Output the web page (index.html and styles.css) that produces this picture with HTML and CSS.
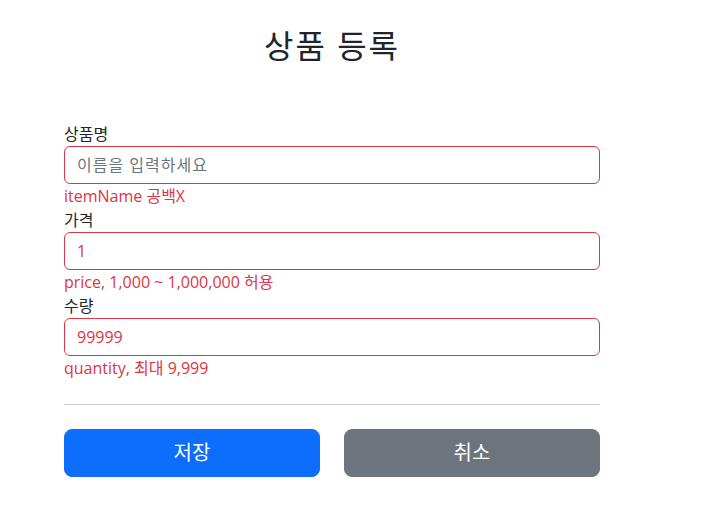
FILE: index.html
```
<!DOCTYPE html>
<html lang="ko">
<head>
<meta charset="utf-8">
<title>상품 등록</title>
<link rel="stylesheet" href="styles.css">
</head>
<body>
<div class="container">
  <div class="header">
    <h2 class="title">상품 등록</h2>
  </div>
  <form class="form">
    <div class="group">
      <label class="label" for="itemName">상품명</label>
      <input class="input field-error" id="itemName" type="text" placeholder="이름을 입력하세요">
      <div class="error">itemName 공백X</div>
    </div>
    <div class="group">
      <label class="label" for="price">가격</label>
      <input class="input field-error" id="price" type="text" value="1">
      <div class="error">price, 1,000 ~ 1,000,000 허용</div>
    </div>
    <div class="group">
      <label class="label" for="quantity">수량</label>
      <input class="input field-error" id="quantity" type="text" value="99999">
      <div class="error">quantity, 최대 9,999</div>
    </div>
    <hr class="divider">
    <div class="actions">
      <button class="btn btn-primary" type="button">저장</button>
      <button class="btn btn-secondary" type="button">취소</button>
    </div>
  </form>
</div>
</body>
</html>
```
FILE: styles.css
```
* { box-sizing: border-box; }
html, body { margin: 0; padding: 0; background: #fff; }
body {
  font-family: "Open Sans", "Noto Sans CJK KR", sans-serif;
  font-size: 16px;
  line-height: 24px;
  color: #212529;
}
.container {
  width: 536px;
  margin-left: 64px;
}
.header { text-align: center; padding-top: 27px; padding-bottom: 57px; }
.title {
  margin: 0;
  font-size: 32px;
  line-height: 38px;
  font-weight: 400;
  letter-spacing: 2px;
}
.form { display: flex; flex-direction: column; }
.group { display: flex; flex-direction: column; }
.label { display: block; line-height: 24px; }
.input {
  display: block;
  width: 100%;
  height: 38px;
  padding: 6px 12px;
  font-family: "Open Sans", "Noto Sans CJK KR", sans-serif;
  font-size: 16px;
  line-height: 24px;
  border: 1px solid #ced4da;
  border-radius: 6px;
  background: #fff;
  outline: none;
}
.input::placeholder { color: #6c757d; opacity: 1; letter-spacing: 1px; }
.field-error { border-color: #dc3545; color: #dc3545; }
.error { color: #dc3545; line-height: 24px; }
.divider {
  margin: 24px 0;
  border: 0;
  border-top: 1px solid #212529;
  opacity: 0.25;
  height: 0;
}
.actions { display: grid; grid-template-columns: 1fr 1fr; gap: 24px; }
.btn {
  height: 48px;
  padding: 8px 16px;
  font-family: "Open Sans", "Noto Sans CJK KR", sans-serif;
  font-size: 20px;
  line-height: 30px;
  color: #fff;
  border: 1px solid transparent;
  border-radius: 8px;
  cursor: pointer;
}
.btn-primary { background: #0d6efd; border-color: #0d6efd; }
.btn-secondary { background: #6c757d; border-color: #6c757d; }
```
